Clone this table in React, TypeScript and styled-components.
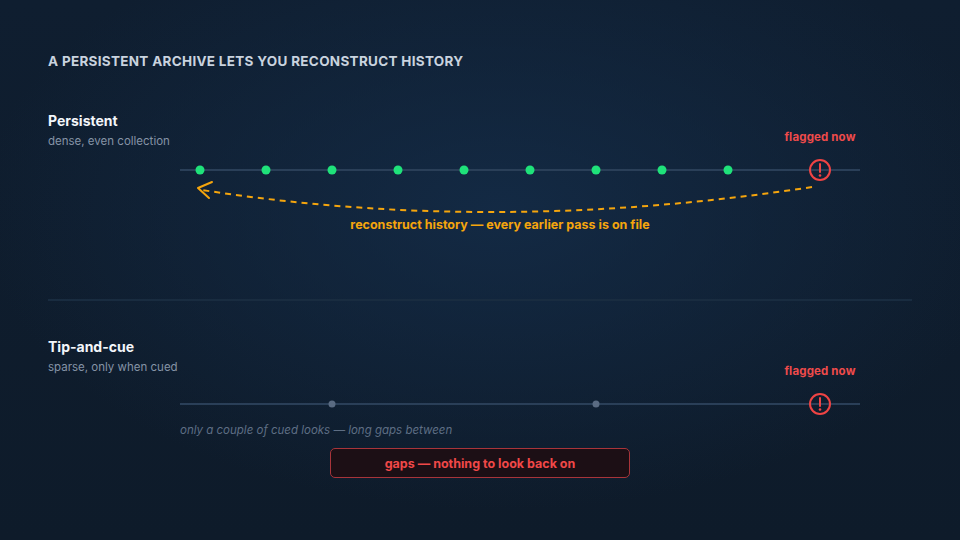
import React from "react";
import styled, { createGlobalStyle } from "styled-components";

const Global = createGlobalStyle`
  html, body { margin: 0; padding: 0; }
  body {
    width: 960px;
    height: 540px;
    overflow: hidden;
    font-family: Inter, "Noto Sans", "Liberation Sans", sans-serif;
    background: #0e1b2a;
  }
  * { box-sizing: border-box; }
`;

const Page = styled.div`
  width: 960px;
  height: 540px;
  padding: 53px 48px 0 48px;
  display: flex;
  flex-direction: column;
  background:
    radial-gradient(ellipse 520px 300px at 500px 210px, rgba(20, 44, 72, 0.85), rgba(20, 44, 72, 0) 100%),
    linear-gradient(180deg, #0f1e30 0%, #0e1b2a 100%);
`;

const Title = styled.h1`
  margin: 0;
  font-size: 13.5px;
  line-height: 16px;
  font-weight: 700;
  letter-spacing: 0.3px;
  color: #c9d3df;
  text-transform: uppercase;
`;

const Section = styled.section<{ $top: number }>`
  margin-top: ${(p) => p.$top}px;
  display: grid;
  grid-template-columns: 132px 680px;
  align-items: start;
`;

const Header = styled.div`
  display: flex;
  flex-direction: column;
  gap: 3px;
  white-space: nowrap;
`;

const Label = styled.div`
  font-size: 14px;
  line-height: 18px;
  font-weight: 700;
  color: #f3f6fa;
`;

const Sub = styled.div`
  font-size: 11.5px;
  line-height: 16px;
  color: #8593a6;
`;

const Chart = styled.div<{ $pad: number }>`
  padding-top: ${(p) => p.$pad}px;
  display: flex;
  flex-direction: column;
`;

const FlagRow = styled.div`
  display: flex;
  justify-content: flex-end;
`;

const Flag = styled.div`
  width: 80px;
  text-align: center;
  font-size: 11.5px;
  line-height: 16px;
  font-weight: 700;
  letter-spacing: 0.15px;
  color: #ef4b4b;
  white-space: nowrap;
`;

const Caption = styled.div`
  padding-right: 40px;
  text-align: center;
  font-size: 12.5px;
  line-height: 16px;
  font-weight: 700;
  color: #f5a50d;
`;

const Note = styled.div`
  font-size: 11.5px;
  line-height: 16px;
  font-style: italic;
  color: #5e6e84;
`;

const GapBox = styled.div`
  margin-top: 10px;
  margin-left: 150px;
  width: 300px;
  height: 30px;
  border: 1px solid #a8343a;
  border-radius: 5px;
  background: #1c0f15;
  display: flex;
  align-items: center;
  justify-content: center;
  font-size: 12.5px;
  font-weight: 700;
  color: #f04848;
`;

const Divider = styled.hr`
  margin: 66px 0 0 0;
  border: none;
  height: 2px;
  background: #192c40;
`;

const LINE = "#2a3f58";
const RED = "#ef4444";

const Alert: React.FC<{ cx: number; cy: number }> = ({ cx, cy }) => (
  <g>
    <circle cx={cx} cy={cy} r={10} fill="none" stroke={RED} strokeWidth={2} />
    <line x1={cx} y1={cy - 6} x2={cx} y2={cy + 2} stroke={RED} strokeWidth={2} strokeLinecap="round" />
    <circle cx={cx} cy={cy + 5.5} r={1.3} fill={RED} />
  </g>
);

const greenDots = [20, 86, 152, 218, 284, 350, 416, 482, 548];
const grayDots = [152, 416];

export default function App() {
  return (
    <>
      <Global />
      <Page>
        <Title>A persistent archive lets you reconstruct history</Title>

        <Section $top={43}>
          <Header>
            <Label>Persistent</Label>
            <Sub>dense, even collection</Sub>
          </Header>
          <Chart $pad={17}>
            <FlagRow>
              <Flag>flagged now</Flag>
            </FlagRow>
            <svg width={680} height={72} viewBox="0 0 680 72">
              <line x1={0} y1={25} x2={680} y2={25} stroke={LINE} strokeWidth={2} />
              {greenDots.map((x) => (
                <circle key={x} cx={x} cy={25} r={4.5} fill="#1fe27a" />
              ))}
              <Alert cx={640} cy={25} />
              <path
                d="M632 42 Q314 90.5 22 45"
                fill="none"
                stroke="#f5a50d"
                strokeWidth={2}
                strokeDasharray="6 5"
              />
              <path
                d="M32 37 L18 43 L29 53"
                fill="none"
                stroke="#f5a50d"
                strokeWidth={2}
                strokeLinecap="round"
                strokeLinejoin="round"
              />
            </svg>
            <Caption>reconstruct history — every earlier pass is on file</Caption>
          </Chart>
        </Section>

        <Divider />

        <Section $top={37}>
          <Header>
            <Label>Tip-and-cue</Label>
            <Sub>sparse, only when cued</Sub>
          </Header>
          <Chart $pad={25}>
            <FlagRow>
              <Flag>flagged now</Flag>
            </FlagRow>
            <svg width={680} height={43} viewBox="0 0 680 43">
              <line x1={0} y1={25} x2={680} y2={25} stroke={LINE} strokeWidth={2} />
              {grayDots.map((x) => (
                <circle key={x} cx={x} cy={25} r={3.5} fill="#5a6b82" />
              ))}
              <Alert cx={640} cy={25} />
            </svg>
            <Note>only a couple of cued looks — long gaps between</Note>
            <GapBox>gaps — nothing to look back on</GapBox>
          </Chart>
        </Section>
      </Page>
    </>
  );
}
